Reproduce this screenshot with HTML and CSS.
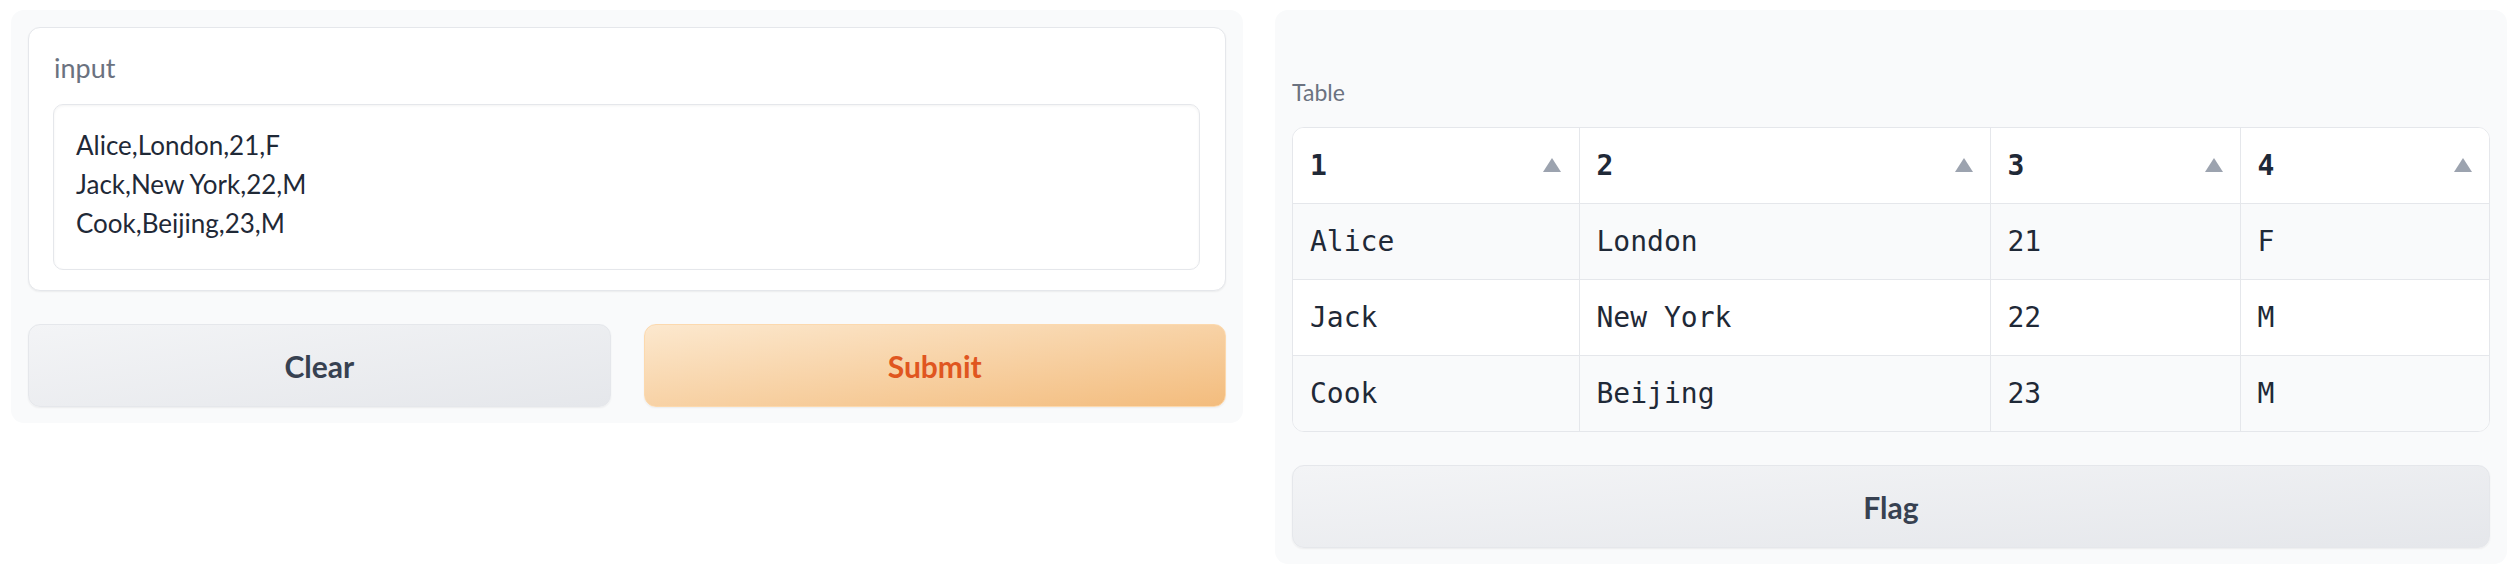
FILE: index.html
```html
<!DOCTYPE html>
<html lang="en">
<head>
<meta charset="utf-8">
<title>Interface</title>
<link rel="stylesheet" href="styles.css">
</head>
<body>
<div class="app">
  <div class="panel">
    <div class="block">
      <label class="block-label" for="inp">input</label>
      <textarea id="inp" class="textarea" rows="3">Alice,London,21,F
Jack,New York,22,M
Cook,Beijing,23,M</textarea>
    </div>
    <div class="btn-row">
      <button class="btn btn-secondary">Clear</button>
      <button class="btn btn-primary">Submit</button>
    </div>
  </div>
  <div class="panel">
    <div class="table-block">
      <div class="table-label">Table</div>
      <div class="table-wrap">
        <table class="df">
          <colgroup>
            <col class="c1"><col class="c2"><col class="c3"><col class="c4">
          </colgroup>
          <thead>
            <tr>
              <th><div class="th-inner"><span>1</span><svg class="sort" viewBox="0 0 18 14" width="18" height="14"><polygon points="9,0 18,14 0,14"/></svg></div></th>
              <th><div class="th-inner"><span>2</span><svg class="sort" viewBox="0 0 18 14" width="18" height="14"><polygon points="9,0 18,14 0,14"/></svg></div></th>
              <th><div class="th-inner"><span>3</span><svg class="sort" viewBox="0 0 18 14" width="18" height="14"><polygon points="9,0 18,14 0,14"/></svg></div></th>
              <th><div class="th-inner"><span>4</span><svg class="sort" viewBox="0 0 18 14" width="18" height="14"><polygon points="9,0 18,14 0,14"/></svg></div></th>
            </tr>
          </thead>
          <tbody>
            <tr><td>Alice</td><td>London</td><td>21</td><td>F</td></tr>
            <tr><td>Jack</td><td>New York</td><td>22</td><td>M</td></tr>
            <tr><td>Cook</td><td>Beijing</td><td>23</td><td>M</td></tr>
          </tbody>
        </table>
      </div>
    </div>
    <button class="btn btn-secondary">Flag</button>
  </div>
</div>
</body>
</html>
```

FILE: styles.css
```css
* { box-sizing: border-box; }

html, body {
  margin: 0;
  padding: 0;
  background: #ffffff;
}

body {
  font-family: Lato, "Noto Sans", "Liberation Sans", sans-serif;
  color: #1f2937;
}

.app {
  display: flex;
  align-items: flex-start;
  gap: 32px;
  padding: 10px 9px 0 11px;
}

.panel {
  flex: 1 1 0;
  min-width: 0;
  display: flex;
  flex-direction: column;
  gap: 33px;
  background: #f9fafb;
  border-radius: 13px;
  padding: 17px 17px 16px 17px;
}

.block {
  display: flex;
  flex-direction: column;
  background: #ffffff;
  border: 1px solid #e5e7eb;
  border-radius: 12px;
  box-shadow: 0 1px 2px rgba(0, 0, 0, 0.06);
  padding: 24px 25px 20px 24px;
}

.block-label {
  display: block;
  font-size: 27px;
  line-height: 32px;
  color: #6b7280;
  padding-left: 1px;
  margin-bottom: 20px;
}

.textarea {
  display: block;
  width: 100%;
  font-family: inherit;
  font-size: 26px;
  line-height: 39px;
  color: #1f2937;
  background: #ffffff;
  border: 1px solid #e5e7eb;
  border-radius: 10px;
  box-shadow: inset 0 1px 3px rgba(0, 0, 0, 0.05);
  padding: 21px 22px 26px 22px;
  resize: none;
  overflow: hidden;
  outline: none;
  margin: 0;
}

.btn-row {
  display: flex;
  gap: 33px;
}

.btn {
  flex: 1 1 0;
  height: 83px;
  font-family: inherit;
  font-size: 30px;
  font-weight: 700;
  border-radius: 12px;
  border: 1px solid #e5e7eb;
  box-shadow: 0 1px 2px rgba(0, 0, 0, 0.06);
  cursor: pointer;
  padding: 0;
}

.btn-secondary {
  background: linear-gradient(to bottom right, #f3f4f6, #e5e7eb);
  color: #374151;
}

.btn-primary {
  background: linear-gradient(to bottom right, #fce8ce, #f3bc7d);
  border-color: #fcd9ae;
  color: #e0561f;
}

.panel > .btn {
  flex: 0 0 auto;
  width: 100%;
}

.table-block {
  display: flex;
  flex-direction: column;
  padding-top: 50px;
}

.table-label {
  font-size: 23px;
  line-height: 30px;
  color: #6b7280;
  margin-bottom: 20px;
}

.table-wrap {
  border: 1px solid #e5e7eb;
  border-radius: 12px;
  overflow: hidden;
  background: #ffffff;
}

.df {
  width: 100%;
  table-layout: fixed;
  border-collapse: collapse;
  font-family: "DejaVu Sans Mono", "Liberation Mono", monospace;
  font-size: 28px;
  color: #1f2937;
}

.c1 { width: 286px; }
.c2 { width: 411px; }
.c3 { width: 250px; }
.c4 { width: 249px; }

.df th,
.df td {
  height: 76px;
  padding: 0 17px;
  text-align: left;
  vertical-align: middle;
  border-left: 1px solid #e5e7eb;
  border-top: 1px solid #e5e7eb;
  white-space: nowrap;
}

.df th {
  height: 75px;
  border-top: none;
  font-weight: 700;
  background: #ffffff;
}

.df th:first-child,
.df td:first-child {
  border-left: none;
}

.df th:first-child { padding-right: 18px; }

.df tbody tr:nth-child(odd) td { background: #f9fafb; }
.df tbody tr:nth-child(even) td { background: #ffffff; }

.th-inner {
  display: flex;
  align-items: center;
  justify-content: space-between;
}

.sort {
  display: block;
  fill: #9ca3af;
  flex: 0 0 auto;
}
```
